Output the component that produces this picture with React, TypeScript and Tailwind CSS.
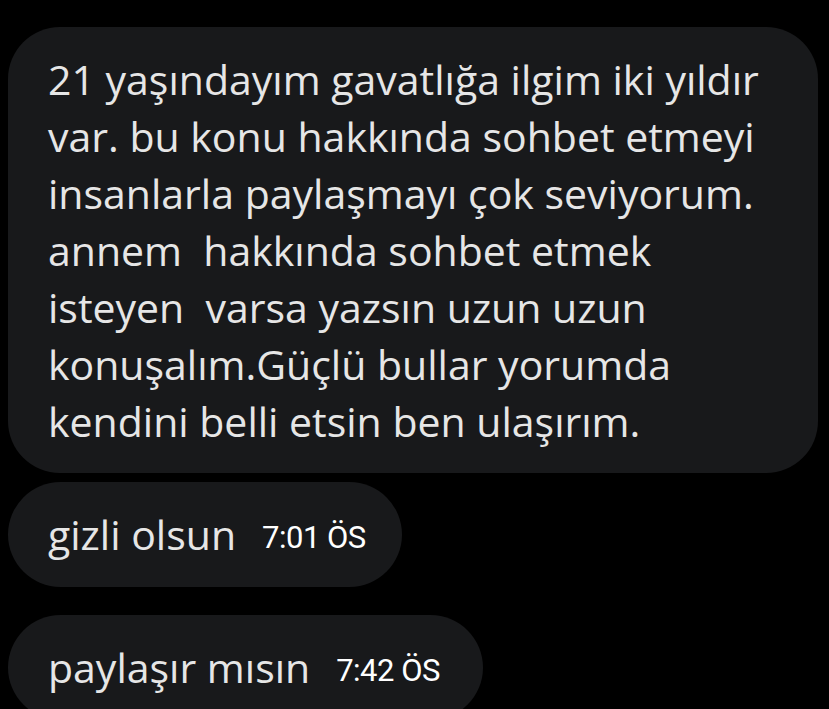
import React from "react";

const lines = [
  "21 yaşındayım gavatlığa ilgim iki yıldır",
  "var. bu konu hakkında sohbet etmeyi",
  "insanlarla paylaşmayı çok seviyorum.",
  "annem  hakkında sohbet etmek",
  "isteyen  varsa yazsın uzun uzun",
  "konuşalım.Güçlü bullar yorumda",
  "kendini belli etsin ben ulaşırım.",
];

const Short = ({ text, time, width }: { text: string; time: string; width: string }) => (
  <div className={`${width} h-[105px] rounded-full bg-[#18191b] flex items-center pl-[40px]`}>
    <span className="text-[41px] text-[#e6e6e6] font-['Open_Sans',sans-serif]">{text}</span>
    <span className="ml-[26px] mt-[8px] text-[31px] text-white font-['Roboto',sans-serif] tracking-[-0.5px]">{time}</span>
  </div>
);

export default function App() {
  return (
    <div className="w-[829px] h-[709px] bg-black overflow-hidden pl-[8px] pt-[27px]">
      <div className="w-[810px] h-[446px] rounded-[52px] bg-[#18191b] pl-[40px] pt-[24px]">
        {lines.map((l) => (
          <div key={l} className="whitespace-pre text-[41px] leading-[57px] text-[#e6e6e6] font-['Open_Sans',sans-serif]">
            {l}
          </div>
        ))}
      </div>
      <div className="mt-[9px] flex flex-col gap-[28px]">
        <Short text="gizli olsun" time="7:01 ÖS" width="w-[394px]" />
        <Short text="paylaşır mısın" time="7:42 ÖS" width="w-[475px]" />
      </div>
    </div>
  );
}
